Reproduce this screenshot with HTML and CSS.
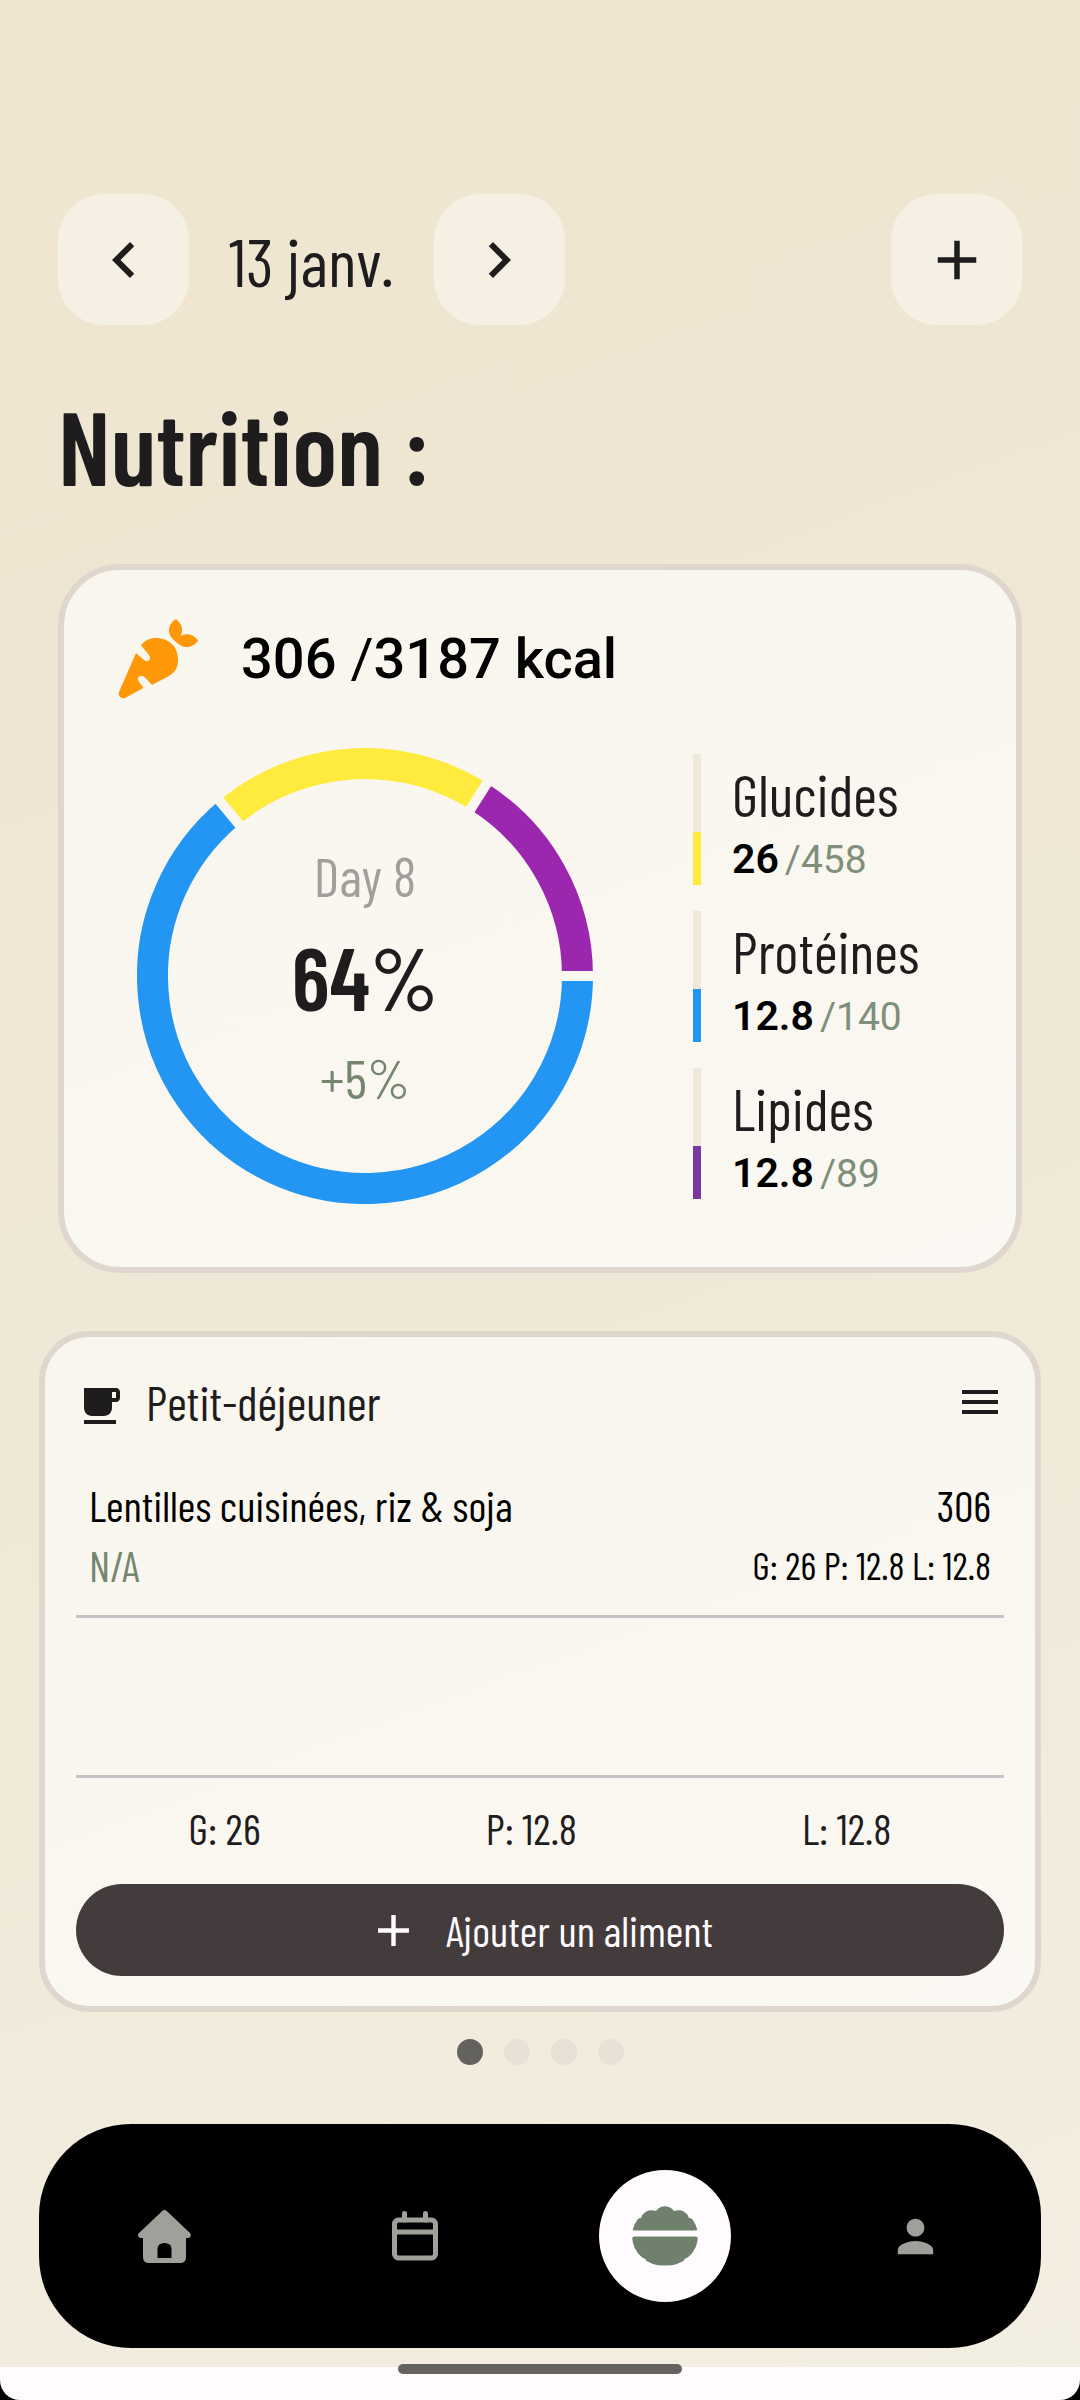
FILE: index.html
```html
<!DOCTYPE html>
<html lang="fr">
<head>
	<meta charset="UTF-8">
	<meta name="viewport" content="width=device-width, initial-scale=1">
	<title>Nutrition</title>
	<link rel="stylesheet" href="styles.css">
</head>
<body>
	<main class="page">
		<div class="toolbar">
			<button class="square-btn" aria-label="Jour précédent">
				<svg width="72" height="72" viewBox="0 0 24 24"><path d="M15.41 7.41L14 6l-6 6 6 6 1.41-1.41L10.83 12z"/></svg>
			</button>
			<span class="date">13 janv.</span>
			<button class="square-btn" aria-label="Jour suivant">
				<svg width="72" height="72" viewBox="0 0 24 24"><path d="M10 6L8.59 7.41 13.17 12l-4.58 4.59L10 18l6-6z"/></svg>
			</button>
			<button class="square-btn add" aria-label="Ajouter">
				<svg width="66" height="66" viewBox="0 0 24 24"><path d="M19 13h-6v6h-2v-6H5v-2h6V5h2v6h6v2z"/></svg>
			</button>
		</div>

		<h1 class="title">Nutrition :</h1>

		<section class="card summary">
			<div class="kcal">
				<svg class="carrot" width="80" height="80" viewBox="0 0 80 80">
					<path d="M1 73L18 34l8 7c4 3 8-1 5-5L23 26.500C27 21 32 19 38 19C51 19 60 28 60 40C60 48 58 53 51 57L34 66L27 58.500C23 55 18 58 20.500 62L25.500 69L7 79C3 80 0 77 1 73z"/>
					<path d="M58 0C64 5 66 11 62.500 17C69 13 77 16 80 21.500C76 28 68 30 62 26C54 20 51 17 51 11C51 7 54 2 58 0z"/>
				</svg>
				<span>306 <span class="slash">/</span>3187 kcal</span>
			</div>
			<div class="stats">
				<div class="donut">
					<svg viewBox="0 0 456 456" stroke-width="31">
						<path stroke="#2296f2" d="M440.500 228A212.500 212.500 0 1 1 92.300 64.500"/>
						<path stroke="#ffeb3e" d="M92.300 64.500A212.500 212.500 0 0 1 341.600 48.400"/>
						<path stroke="#9a27ae" d="M341.600 48.400A212.500 212.500 0 0 1 440.500 228"/>
						<path stroke="#faf7f0" stroke-width="10" d="M108 83.500L78 47.400M325 74.600L352 32M420 228H456"/>
					</svg>
					<div class="donut-text">
						<span class="day">Day 8</span>
						<span class="percent"><b>64</b>%</span>
						<span class="delta">+5%</span>
					</div>
				</div>
				<div class="macros">
					<div class="macro">
						<div class="bar"><div class="fill yellow"></div></div>
						<div>
							<div class="macro-name">Glucides</div>
							<div class="macro-value"><b>26</b><span>/458</span></div>
						</div>
					</div>
					<div class="macro">
						<div class="bar"><div class="fill blue"></div></div>
						<div>
							<div class="macro-name">Protéines</div>
							<div class="macro-value"><b>12.8</b><span>/140</span></div>
						</div>
					</div>
					<div class="macro">
						<div class="bar"><div class="fill purple"></div></div>
						<div>
							<div class="macro-name">Lipides</div>
							<div class="macro-value"><b>12.8</b><span>/89</span></div>
						</div>
					</div>
				</div>
			</div>
		</section>

		<section class="card meal">
			<div class="meal-header">
				<svg width="48" height="48" viewBox="0 -2 24 24"><path d="M20 3H4v10c0 2.210 1.790 4 4 4h6c2.210 0 4-1.790 4-4v-3h2c1.110 0 2-.89 2-2V5c0-1.110-.89-2-2-2zm0 5h-2V5h2v3zM4 19h16v2H4z"/></svg>
				<h2>Petit-déjeuner</h2>
				<button class="menu-btn" aria-label="Menu">
					<svg width="48" height="48" viewBox="0 0 24 24"><path d="M3 18h18v-2H3v2zm0-5h18v-2H3v2zm0-7v2h18V6H3z"/></svg>
				</button>
			</div>
			<div class="food">
				<div class="food-line"><span>Lentilles cuisinées, riz &amp; soja</span><span>306</span></div>
				<div class="food-line"><span class="muted">N/A</span><span class="small">G: 26 P: 12.8 L: 12.8</span></div>
			</div>
			<div class="empty"></div>
			<div class="totals">
				<span>G: 26</span>
				<span>P: 12.8</span>
				<span>L: 12.8</span>
			</div>
			<button class="add-food">
				<svg width="53" height="53" viewBox="0 0 24 24"><path d="M19 13h-6v6h-2v-6H5v-2h6V5h2v6h6v2z"/></svg>
				Ajouter un aliment
			</button>
		</section>

		<div class="dots">
			<span class="dot active"></span>
			<span class="dot"></span>
			<span class="dot"></span>
			<span class="dot"></span>
		</div>

		<nav class="navbar">
			<a href="#" aria-label="Accueil">
				<svg width="53" height="53" viewBox="0 0 53 53"><path fill-rule="evenodd" d="M24 1.200Q26.500-1 29 1.200L52 23c2 2 0 5-2 5h-2v19q0 6-6 6H11q-6 0-6-6V28H3c-3 0-4-3-2-5zM19.500 48H33.500V39q0-6-7-6t-7 6z"/></svg>
			</a>
			<a href="#" aria-label="Calendrier">
				<svg width="46" height="50" viewBox="0 0 46 50" class="outline"><rect x="2.500" y="9" width="41" height="38" rx="4"/><path d="M2.500 21H43.500M12.500 9V2.500M33.500 9V2.500"/></svg>
			</a>
			<a href="#" class="current" aria-label="Nutrition">
				<svg width="66" height="60" viewBox="0 0 66 60"><path d="M2 24.500Q0 24.500 0 22C0 16 4 12.500 9 12C11 5 18 3 24 5C28-1.500 38-1.500 42 5C48 3 55 5 57 12C62 12.500 66 16 66 22Q66 24.500 64 24.500zM2 30.500H64Q66 30.500 66 33C66 43 60 50 52.500 53L52 55.500L49 59.500H17L14 55.500L13.500 53C6 50 0 43 0 33Q0 30.500 2 30.500z"/></svg>
			</a>
			<a href="#" aria-label="Profil">
				<svg width="53" height="53" viewBox="0 0 24 24"><path d="M12 12c2.210 0 4-1.790 4-4s-1.790-4-4-4-4 1.790-4 4 1.790 4 4 4zm0 2c-2.670 0-8 1.340-8 4v2h16v-2c0-2.660-5.330-4-8-4z"/></svg>
			</a>
		</nav>
	</main>
	<footer class="system-bar"><div class="handle"></div></footer>
</body>
</html>
```
FILE: styles.css
```css
* {
	box-sizing: border-box;
}
html {
	background: #000;
}
body {
	margin: 0;
	min-height: 100vh;
	display: flex;
	flex-direction: column;
	font-family: "Barlow Condensed", "Roboto Condensed", Roboto, sans-serif;
	font-size: 43px;
	color: #1e1c1d;
	background: #fffbff;
	border-radius: 0 0 20px 20px;
}
svg {
	display: block;
	fill: currentColor;
}
button {
	font: inherit;
	color: inherit;
	border: none;
	padding: 0;
	cursor: pointer;
}
.page {
	flex: 1;
	padding: 194px 39px 19px;
	background: linear-gradient(160deg, #efe5d0, #efe6d3 30%, #f1ead9 65%, #f2eee1);
}
.toolbar {
	display: flex;
	align-items: center;
	gap: 40px;
	margin: 0 19px;
}
.square-btn {
	display: flex;
	align-items: center;
	justify-content: center;
	width: 131px;
	height: 131px;
	border-radius: 46px;
	background: #f5f0e3;
}
.square-btn.add {
	margin-left: auto;
}
.date {
	font-size: 67px;
	line-height: 80px;
}
.title {
	margin: 58px 19px 57px;
	font-size: 104px;
	font-weight: 600;
	line-height: 124px;
}
.card {
	border: 6px solid #dfd7ce;
	background: linear-gradient(160deg, #f9f6ee, #faf8f2);
}

/* Summary card */
.summary {
	margin: 0 19px 58px;
	padding: 49px 54px 63px;
	border-radius: 62px;
}
.kcal {
	display: flex;
	align-items: center;
	gap: 43px;
	font-family: Roboto, sans-serif;
	font-size: 56px;
	font-weight: 500;
	line-height: 80px;
	color: #000;
}
.carrot {
	fill: #ff9808;
}
.slash {
	font-weight: 400;
}
.stats {
	display: flex;
	align-items: center;
	gap: 100px;
	margin: 49px 19px 0;
}
.donut {
	display: grid;
	width: 456px;
}
.donut > * {
	grid-area: 1 / 1;
}
.donut svg {
	fill: none;
}
.donut-text {
	display: flex;
	flex-direction: column;
	align-items: center;
	justify-content: center;
	gap: 15px;
	font-size: 55px;
	line-height: 66px;
}
.day {
	color: #a19f9b;
}
.percent {
	font-size: 88px;
	font-weight: 500;
	line-height: 106px;
}
.percent b {
	font-weight: 600;
}
.delta {
	color: #75866f;
}
.macros {
	display: flex;
	flex-direction: column;
	gap: 26px;
}
.macro {
	display: flex;
	align-items: flex-end;
	gap: 31px;
}
.bar {
	display: flex;
	align-items: flex-end;
	width: 8px;
	height: 131px;
	background: #f0e8da;
}
.fill {
	width: 100%;
	height: 40%;
}
.yellow {
	background: #ffeb3e;
}
.blue {
	background: #2296f2;
}
.purple {
	background: #7a389f;
}
.macro-name {
	margin-bottom: 5px;
	font-size: 58px;
	line-height: 70px;
}
.macro-value {
	display: flex;
	align-items: baseline;
	gap: 6px;
	font-family: Roboto, sans-serif;
	font-size: 39px;
	line-height: 50px;
	color: #7f8f7a;
}
.macro-value b {
	font-size: 41px;
	font-weight: 600;
	color: #000;
}

/* Meal card */
.meal {
	padding: 35px 31px 30px;
	border-radius: 50px;
}
.meal-header {
	display: flex;
	align-items: center;
	gap: 22px;
	height: 60px;
}
.meal-header h2 {
	flex: 1;
	margin: 0;
	font-size: 48px;
	font-weight: 400;
}
.menu-btn {
	background: none;
}
.food {
	padding: 43px 13px 20px;
	line-height: 60px;
	color: #000;
	border-bottom: 3px solid #c5c4c6;
}
.food-line {
	display: flex;
	justify-content: space-between;
}
.muted {
	color: #75866f;
}
.small {
	font-size: 38px;
}
.empty {
	height: 160px;
	border-bottom: 3px solid #c5c4c6;
}
.totals {
	display: flex;
	justify-content: space-around;
	margin: 20px 0 26px;
	line-height: 60px;
}
.add-food {
	display: flex;
	align-items: center;
	justify-content: center;
	gap: 26px;
	width: 100%;
	height: 92px;
	border-radius: 46px;
	color: #fffbff;
	background: #443c3c;
}
.dots {
	display: flex;
	justify-content: center;
	gap: 21px;
	margin: 27px 0 59px;
}
.dot {
	width: 26px;
	height: 26px;
	border-radius: 50%;
	background: #e8e1d5;
}
.dot.active {
	background: #63625f;
}

/* Bottom navigation */
.navbar {
	display: flex;
	align-items: center;
	height: 224px;
	border-radius: 92px;
	background: #000;
}
.navbar a {
	flex: 1;
	display: flex;
	align-items: center;
	justify-content: center;
	color: #a09f9a;
}
.navbar .outline {
	fill: none;
	stroke: currentColor;
	stroke-width: 5;
	stroke-linecap: round;
}
.navbar .current {
	color: #6f806d;
}
.current svg {
	box-sizing: content-box;
	padding: 36px 33px;
	border-radius: 50%;
	background: #fffbff;
}
.system-bar {
	position: relative;
	height: 33px;
}
.handle {
	position: absolute;
	top: -3px;
	left: 50%;
	width: 284px;
	height: 10px;
	margin-left: -142px;
	border-radius: 5px;
	background: #646360;
}
```
